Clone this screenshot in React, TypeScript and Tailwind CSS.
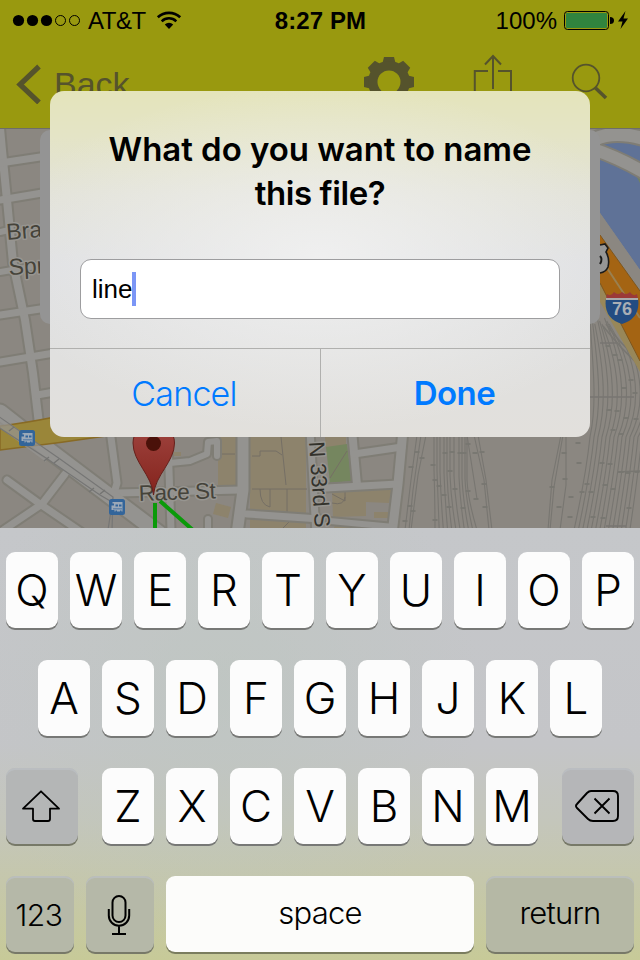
import React from "react";

const SANS = "font-['Liberation_Sans',Arial,sans-serif]";

function StatusBar() {
  return (
    <div className="grid h-10 grid-cols-[1fr_auto_1fr] items-center pt-[2px] pr-[11px] pl-3 text-[24px] leading-[38px] text-black">
      <div className="flex items-center">
        <svg width="70" height="14" viewBox="0 0 70 14" className="mr-[6px]">
          {[6.5, 20.5, 34.5].map((x) => (
            <circle key={x} cx={x} cy="6.5" r="5.6" fill="#000" />
          ))}
          {[48.5, 62.5].map((x) => (
            <circle key={x} cx={x} cy="6.5" r="5" fill="none" stroke="#000" strokeWidth="1" />
          ))}
        </svg>
        <span className="tracking-[-0.5px]">AT&amp;T</span>
        <svg width="26" height="20" viewBox="0 0 26 20" className="ml-[10px]" fill="none" stroke="#000">
          <path d="M1.800 6.2A16.5 16.5 0 0 1 24.200 6.2" strokeWidth="2.7" />
          <path d="M5.700 10.300A10.5 10.5 0 0 1 20.300 10.300" strokeWidth="2.5" />
          <path d="M13 18L8.800 13.500A6 6 0 0 1 17.200 13.500Z" fill="#000" stroke="none" />
        </svg>
      </div>
      <span className="font-bold tracking-[0.1px]">8:27 PM</span>
      <div className="flex items-center justify-end">
        <span>100%</span>
        <svg width="66" height="28" viewBox="563 7 66 28" className="ml-[6px]">
          <rect x="564.5" y="11.5" width="44" height="18" rx="3" fill="none" stroke="#000" />
          <rect x="566" y="13" width="41" height="15" rx="1" fill="#30843e" />
          <path d="M610 17a4 3.5 0 0 1 0 7z" fill="#000" />
          <path d="M625.5 11L618 21.5H622.5L620.5 29L628 18.5H623.5Z" fill="#000" />
        </svg>
      </div>
    </div>
  );
}

function GearIcon() {
  return (
    <svg width="52" height="52" viewBox="-26 -26 52 52">
      {[0, 45, 90, 135].map((a) => (
        <path key={a} d="M-5 -25H5L7 -17V17L5 25H-5L-7 17V-17Z" fill="#55532c" transform={`rotate(${a})`} />
      ))}
      <circle r="21" fill="#55532c" />
      <circle r="11.5" fill="#99990f" />
    </svg>
  );
}

function NavBar() {
  return (
    <div className="flex h-[88px] items-start justify-between pr-[32px] pl-[16px]">
      <div className="flex items-start">
        <svg width="26" height="40" viewBox="16 64 26 40" className="mt-6" fill="none" stroke="#55532c" strokeWidth="5.2">
          <path d="M39 66.5L20 84.5L39 102.5" />
        </svg>
        <span className="mt-[24px] ml-[12px] text-[34px] leading-[40px] text-[#55532c]">Back</span>
      </div>
      <div className="flex items-start">
        <div className="mt-[16px]">
          <GearIcon />
        </div>
        <svg width="42" height="54" viewBox="472 53 42 54" className="mt-[13px] ml-[57px]" fill="none" stroke="#55532c" strokeWidth="2">
          <path d="M488 71H474.8V104H511V71H498M493 89V56M485 64.5L493 56L501 64.5" />
        </svg>
        <svg width="38" height="38" viewBox="570 62 38 38" className="mt-[22px] ml-[56px]" fill="none" stroke="#55532c">
          <circle cx="586" cy="78" r="13.3" strokeWidth="1.8" />
          <path d="M595.5 88L606 98" strokeWidth="3.6" />
        </svg>
      </div>
    </div>
  );
}

const ROADS: [string, number][] = [
  ["M0 128L2 150L7 200L13 263L25 320L33 373L39 424", 8],
  ["M0 163L60 154", 7],
  ["M0 200L60 190", 7],
  ["M0 232L9 230", 6],
  ["M0 272L60 262", 6],
  ["M0 315L60 306", 7],
  ["M0 362L60 352", 7],
  ["M37 395L60 391", 7],
  ["M7 480L40 504L84 534", 7],
  ["M65 474L42 504L-4 535", 7],
  ["M110 430L117 483L112 500", 7],
  ["M117 493L240 490", 7],
  ["M168 440L171 530", 7],
  ["M170 463L190 461L207 454L208 442L217 441L217 456", 6],
  ["M243 430L243 490L237 534", 11],
  ["M247 514L320 519", 7],
  ["M208 519V534", 6],
  ["M310 430L316 534", 7],
  ["M352 430L357 485", 8],
  ["M354 454L402 447", 7],
  ["M403 430L398 484L392 534", 9],
  ["M326 488L398 484", 7],
  ["M330 521L394 527", 6],
  ["M0 412L46 448L160 534", 15],
  ["M595 139Q615 130 645 139", 13],
  ["M590 148Q620 158 645 173", 12],
];

const YARD_LEFT = [434, 437, 440, 444, 447, 450, 454, 459, 462, 465, 467];
const YARD_RIGHT = [0, 1, 2, 3, 4, 5, 6, 7, 8, 9, 10, 11, 12, 13];
const TIES: [number, number][] = [
  [417, 452], [422, 458], [411, 467], [433, 465], [435, 480], [439, 486], [444, 495], [445, 453], [452, 452], [460, 453],
  [464, 453], [450, 471], [468, 444], [475, 453], [482, 452], [455, 489], [468, 491], [484, 484], [485, 507], [476, 499],
  [449, 507], [463, 508], [410, 506], [413, 511], [405, 521], [435, 520], [564, 453], [578, 443], [579, 463], [565, 479],
  [552, 487], [587, 484], [582, 492], [591, 492], [571, 497], [559, 507], [570, 517], [593, 517], [602, 463], [610, 464],
  [605, 485], [613, 489], [621, 472], [628, 473], [637, 472], [621, 434], [613, 430], [629, 508], [603, 518], [609, 410],
  [617, 411], [626, 418], [636, 419], [631, 380], [624, 388], [615, 355], [608, 346], [635, 393], [620, 360],
];

function TransitBadge({ x, y }: { x: number; y: number }) {
  return (
    <g transform={`translate(${x} ${y})`}>
      <rect width="16" height="16" rx="2.5" fill="#33659a" />
      <path d="M2.5 9V6.5H5V4.5H3.5V3H13.5V12.5H5.5V11H2.5Z" fill="#9ba9b8" />
      <path d="M6.5 5.5H9V7.5H6.5ZM10 5.5H12.5V7.5H10ZM4 9.5H13V10.3H4ZM6.5 11.5H8V13H6.5ZM11 11.5H12.5V13H11Z" fill="#33659a" />
    </g>
  );
}

function MapView() {
  return (
    <svg width="640" height="400" viewBox="0 128 640 400" className="block shrink-0">
      <rect y="128" width="640" height="400" fill="#8b8781" />

      {/* parks and building lots */}
      <g fill="#8d836c">
        <path d="M218 437H236V485H218ZM250 437H306V530H250ZM172 452H181V456H172ZM216 503L231 507L228 518L213 514ZM325 437H346V446L326 449ZM332 492L392 488L389 503L366 502V516L333 517ZM374 512H388V518H374ZM335 525L372 528H334Z" />
      </g>
      <path d="M326 447L347 444L352 481L330 483Z" fill="#75865f" />
      <path d="M220 454H235M252 456H260V451H276L282 455M281 437L286 485M252 489H307M260 489Q260 505 270 507V489M287 489V512M330 478L347 451M332 494L345 501V492M332 503Q344 506 345 497M283 528L289 522" fill="none" stroke="#756f65" />

      {/* river */}
      <path d="M600 128H640V270L600 213Z" fill="#5f7297" />
      <path d="M604 128H640V140L615 138ZM633 170L640 168V183Z" fill="#728261" />
      <path d="M600 213L640 270V290L600 235Z" fill="#8b8781" />

      {/* rail yards */}
      <g fill="none" stroke="#787671" strokeWidth="1.1">
        <path d="M417 435L411 480L405 530M421 435L413 490L409 530M426 435L418 475L411 530M467 435L477 499M474 435L484 480L489 530M478 435L486 480L492 530M561 435L552 480L548 530M563 435L554 487L550 530M566 435V485L560 530" />
        {YARD_LEFT.map((x, i) => (
          <path key={x} d={`M${x} 435V${470 + i}Q${x + 1} 500 ${435 + i * 4.2} 530`} />
        ))}
        {YARD_RIGHT.map((i) => (
          <path
            key={i}
            d={`M${590 + i * 2.4} ${318 + (i % 3) * 3}C${592 + i * 5} 360 ${598 + i * 5} 400 ${590 + i * 4} 437Q${586 + i * 4} 475 ${574 + i * 4.3} 530`}
          />
        ))}
        <path d="M603 326Q622 350 640 366M606 324Q625 350 640 358M600 343H618M590 397H634M618 472L640 471M606 526H626" strokeWidth="1.6" />
        {TIES.map(([x, y]) => (
          <path key={`${x}-${y}`} d={`M${x - 2.5} ${y}H${x + 2.5}`} strokeWidth="1.8" />
        ))}
      </g>

      {/* expressway */}
      <path d="M600 275L640 345V372L600 302Z" fill="#988759" />
      <path d="M600 235L640 291V361L600 283Z" fill="#a46413" />
      <path d="M600 235L640 291M600 283L640 361" stroke="#7e571f" fill="none" />
      <path d="M605 265L640 318" stroke="#9a8050" strokeWidth="2" />

      {/* streets */}
      <g fill="none" stroke="#7f7d75" strokeLinecap="round" strokeLinejoin="round">
        {ROADS.map(([d, w]) => (
          <path key={d} d={d} strokeWidth={w + 4} />
        ))}
      </g>
      <g fill="none" stroke="#949390" strokeLinecap="round" strokeLinejoin="round">
        {ROADS.map(([d, w]) => (
          <path key={d} d={d} strokeWidth={w} />
        ))}
      </g>
      <path d="M0 426Q50 420 120 402V434Q60 443 0 450Z" fill="#9a8639" stroke="#886a25" strokeWidth="1.5" />
      <path d="M0 416L46 450V462L0 428Z" fill="#949390" opacity=".75" />
      <path d="M-2 416L60 459L113 497L108 530M-2 427L46 458L100 495L112 502M113 497L112 530" fill="none" stroke="#767675" strokeWidth="1.2" />
      <path d="M9 431L14 427M44 461L49 457M54 463L59 459M89 492L94 488M100 494L105 490" stroke="#747472" strokeWidth="1.4" />

      {/* info card dimmed behind the alert */}
      <rect x="40" y="130" width="560" height="194" rx="10" fill="#949494" />

      <g fontFamily="'Liberation Sans', Arial, sans-serif" fill="#45433a" stroke="#979590" strokeWidth="3" paintOrder="stroke" strokeLinejoin="round">
        <svg x="0" y="200" width="40" height="100" viewBox="0 200 40 100">
          <text x="7" y="240" fontSize="23" transform="rotate(-5 7 240)">Bra</text>
          <text x="9" y="275" fontSize="23" transform="rotate(-3 9 275)">Spr</text>
        </svg>
        <text x="139" y="501" fontSize="22.5" textLength="77" transform="rotate(-2 139 501)">Race St</text>
        <text x="309" y="442" fontSize="22" textLength="86" transform="rotate(86 309 442)" fill="#33322c">N 33rd S</text>
      </g>

      {/* route shields */}
      <g>
        <path d="M600 245L605 244L608 248L606 252Q610 259 608 267Q606 272 600 273" fill="#969696" stroke="#1b1b1b" strokeWidth="1.6" />
        <path d="M600 256Q603 259 600 264" stroke="#1b1b1b" strokeWidth="2" fill="none" />
        <path d="M607 294Q611 297 614 292Q618 296 622 292Q626 296 630 292Q633 297 637 294L638 299H606Z" fill="#9b3a38" />
        <path d="M606 298H638Q641 318 622 324Q603 318 606 298Z" fill="#234c82" />
        <path d="M606 298H638V300H606Z" fill="#aaaaaa" />
        <text x="622" y="315" fontFamily="'Liberation Sans', Arial, sans-serif" fontSize="18" fontWeight="bold" textAnchor="middle" fill="#a9aeb5">76</text>
      </g>

      <TransitBadge x={19} y={430} />
      <TransitBadge x={109} y={499} />

      {/* drawn line and its pin */}
      <path d="M155 503V530M160 501L194 531" stroke="#0a9a09" strokeWidth="4" fill="none" />
      <defs>
        <linearGradient id="pin" x1="0" x2="0" y1="0" y2="1">
          <stop offset="0" stopColor="#a04540" />
          <stop offset="1" stopColor="#84231c" />
        </linearGradient>
      </defs>
      <path d="M153.5 495C152 475 133 462 133 443A20.7 20.7 0 0 1 174.500 443C174.500 462 155 475 153.500 495Z" fill="url(#pin)" stroke="#66201b" />
      <circle cx="153.500" cy="443.500" r="7.500" fill="#4a1109" />

      <rect y="128" width="640" height="1" fill="#6e6e68" />
    </svg>
  );
}

function NameAlert() {
  return (
    <div className="absolute top-[91px] left-[50px] flex h-[346px] w-[540px] flex-col overflow-hidden rounded-[14px] bg-[radial-gradient(ellipse_60%_50%_at_50%_48%,rgba(242,242,242,0.85),rgba(242,242,242,0)),linear-gradient(180deg,#e4e4bb_0%,#e4e4c6_13%,#e2e2d8_30%,#dfe0e2_50%,#e0e0df_75%,#e2e0dc_100%)]">
      <h1 className="mt-[36px] text-center font-['Inter','Liberation_Sans',sans-serif] text-[33px] leading-[44px] font-semibold tracking-[-0.05px] text-black">
        What do you want to name
        <br />
        <span className="tracking-[-0.4px]">this file?</span>
      </h1>
      <div className="mx-[30px] mt-[44px] flex h-[60px] shrink-0 items-center rounded-[11px] border border-[#9d9d9f] bg-white pl-[11px] text-[26px]">
        <span>line</span>
        <span className="h-[34px] w-[4px] bg-[#7b96f6]" />
      </div>
      <div className="mt-[29px] grid flex-1 grid-cols-[270px_270px] border-t border-[#b0b0ae] font-['Inter','Liberation_Sans',sans-serif] text-[34px] leading-[89px] text-[#007aff]">
        <button className="pr-[2px] text-center font-light tracking-[-0.8px]">Cancel</button>
        <button className="border-l border-[#b0b0ae] pr-[2px] text-center text-[33px] font-semibold tracking-[-0.5px]">Done</button>
      </div>
    </div>
  );
}

function LetterKey({ label }: { label: string }) {
  return (
    <div className="h-[76px] w-[52px] rounded-[9px] bg-[#fcfcfc] text-center font-['Inter','Liberation_Sans',sans-serif] text-[44px] leading-[76px] font-light text-black shadow-[0_2px_0_#777876]">
      <span className="-mx-2">{label}</span>
    </div>
  );
}

const darkKey =
  "flex h-[76px] items-center justify-center rounded-[9px] shadow-[0_2px_0_#777968,inset_0_2px_0_rgba(188,192,196,0.7)]";

function Keyboard() {
  return (
    <div className="flex h-[432px] shrink-0 flex-col gap-8 bg-[radial-gradient(ellipse_40%_60%_at_35%_38%,rgba(188,198,190,0.6),rgba(190,198,190,0)),linear-gradient(180deg,#c5c7ca_0%,#c4c5c8_50%,#c4c6bb_68%,#c5c7ab_82%,#c7ca98_100%)] px-[6px] pt-6 text-black">
      <div className="flex gap-3">
        {"QWERTYUIOP".split("").map((k) => (
          <LetterKey key={k} label={k} />
        ))}
      </div>
      <div className="flex justify-center gap-3">
        {"ASDFGHJKL".split("").map((k) => (
          <LetterKey key={k} label={k} />
        ))}
      </div>
      <div className="flex justify-between">
        <div className={`${darkKey} w-[72px] bg-[#b4b6b6]`}>
          <svg width="40" height="34" viewBox="21 789 40 34" fill="none" stroke="#000" strokeWidth="1.8" className="-ml-[2px]" strokeLinejoin="round">
            <path d="M41 791.300L23 808.700H33V819Q33 821 35 821H48Q50 821 50 819V808.700H59Z" />
          </svg>
        </div>
        <div className="flex gap-3">
          {"ZXCVBNM".split("").map((k) => (
            <LetterKey key={k} label={k} />
          ))}
        </div>
        <div className={`${darkKey} w-[72px] bg-[#b5b6b8]`}>
          <svg width="46" height="34" viewBox="574 789 46 34" fill="none" stroke="#000" strokeWidth="1.9" className="-ml-[2px]" strokeLinejoin="round">
            <path d="M591 791H613Q618 791 618 796V816Q618 821 613 821H593Q590 821 588 819L577 808Q575 806 577 804L587 793Q589 791 591 791ZM594.500 798.500L609.500 813.500M609.500 798.500L594.500 813.500" />
          </svg>
        </div>
      </div>
      <div className="flex gap-3 font-['Inter','Liberation_Sans',sans-serif] text-[31px] leading-[76px] font-light">
        <div className={`${darkKey} w-[68px] bg-[#b5b8a8] pt-[2px] pr-[2px] text-[30px] tracking-[-0.4px]`}>
          123
        </div>
        <div className={`${darkKey} w-[68px] bg-[#b5b8a8]`}>
          <svg width="26" height="44" viewBox="106 893 26 44" fill="none" stroke="#000" strokeWidth="2" className="-ml-[2px] mt-[2px]">
            <rect x="112.500" y="896" width="13" height="26" rx="6.500" />
            <path d="M108.800 909V915.500A10.200 10.200 0 0 0 129.200 915.500V909M119 926V934M112 934H126" />
          </svg>
        </div>
        <div className="h-[76px] w-[308px] rounded-[9px] bg-[#fcfcfa] text-center leading-[73px] tracking-[-0.8px] shadow-[0_2px_0_#7a7d5e]">
          space
        </div>
        <div className={`${darkKey} w-[148px] bg-[#b5b8a5] pb-[3px] tracking-[-0.8px]`}>
          return
        </div>
      </div>
    </div>
  );
}

export default function App() {
  return (
    <div className={`${SANS} relative flex h-[960px] w-[640px] flex-col overflow-hidden bg-[#99990f]`}>
      <header className="h-[128px] shrink-0">
        <StatusBar />
        <NavBar />
      </header>
      <MapView />
      <Keyboard />
      <NameAlert />
    </div>
  );
}
